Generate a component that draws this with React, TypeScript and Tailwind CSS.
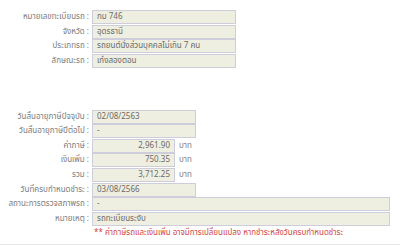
import React from "react";

const font = "font-['Tahoma','Noto_Sans_Thai','Noto_Sans',sans-serif]";

function Row({ label, value, w, right, unit }: { label: string; value: string; w: string; right?: boolean; unit?: string }) {
  return (
    <div className="flex h-[14.6px] items-center">
      <div className="w-[92px] shrink-0 pr-[3px] text-right text-[8px] leading-none text-[#7d7d7d]">{label} :</div>
      <div
        className={`${w} flex h-[14px] shrink-0 items-center border border-[#cdcddb] bg-[#efefe1] px-[4px] text-[8px] leading-none text-[#6a6a6a] ${right ? "justify-end" : ""}`}
      >
        {value}
      </div>
      {unit && <div className="pl-[4px] text-[8px] leading-none text-[#7d7d7d]">{unit}</div>}
    </div>
  );
}

export default function App() {
  return (
    <div className={`${font} h-[250px] w-[400px] bg-white`}>
      <div className="flex h-[245px] flex-col border-b border-[#e8e8e8] pt-[10px]">
        <div className="flex flex-col">
          <Row label="หมายเลขทะเบียนรถ" value="กม 746" w="w-[144px]" />
          <Row label="จังหวัด" value="อุดรธานี" w="w-[144px]" />
          <Row label="ประเภทรถ" value="รถยนต์นั่งส่วนบุคคลไม่เกิน 7 คน" w="w-[144px]" />
          <Row label="ลักษณะรถ" value="เก๋งสองตอน" w="w-[144px]" />
        </div>
        <div className="mt-[41px] flex flex-col">
          <Row label="วันสิ้นอายุภาษีปัจจุบัน" value="02/08/2563" w="w-[104px]" />
          <Row label="วันสิ้นอายุภาษีปีต่อไป" value="-" w="w-[104px]" />
          <Row label="ค่าภาษี" value="2,961.90" w="w-[83px]" right unit="บาท" />
          <Row label="เงินเพิ่ม" value="750.35" w="w-[83px]" right unit="บาท" />
          <Row label="รวม" value="3,712.25" w="w-[83px]" right unit="บาท" />
          <Row label="วันที่ครบกำหนดชำระ" value="03/08/2566" w="w-[104px]" />
          <Row label="สถานะการตรวจสภาพรถ" value="-" w="w-[298px]" />
          <Row label="หมายเหตุ" value="รถทะเบียนระงับ" w="w-[298px]" />
          <div className="flex h-[14.6px] items-center pl-[94px] text-[8px] leading-none text-[#d24545]">
            ** ค่าภาษีรถและเงินเพิ่ม อาจมีการเปลี่ยนแปลง หากชำระหลังวันครบกำหนดชำระ
          </div>
        </div>
      </div>
    </div>
  );
}
